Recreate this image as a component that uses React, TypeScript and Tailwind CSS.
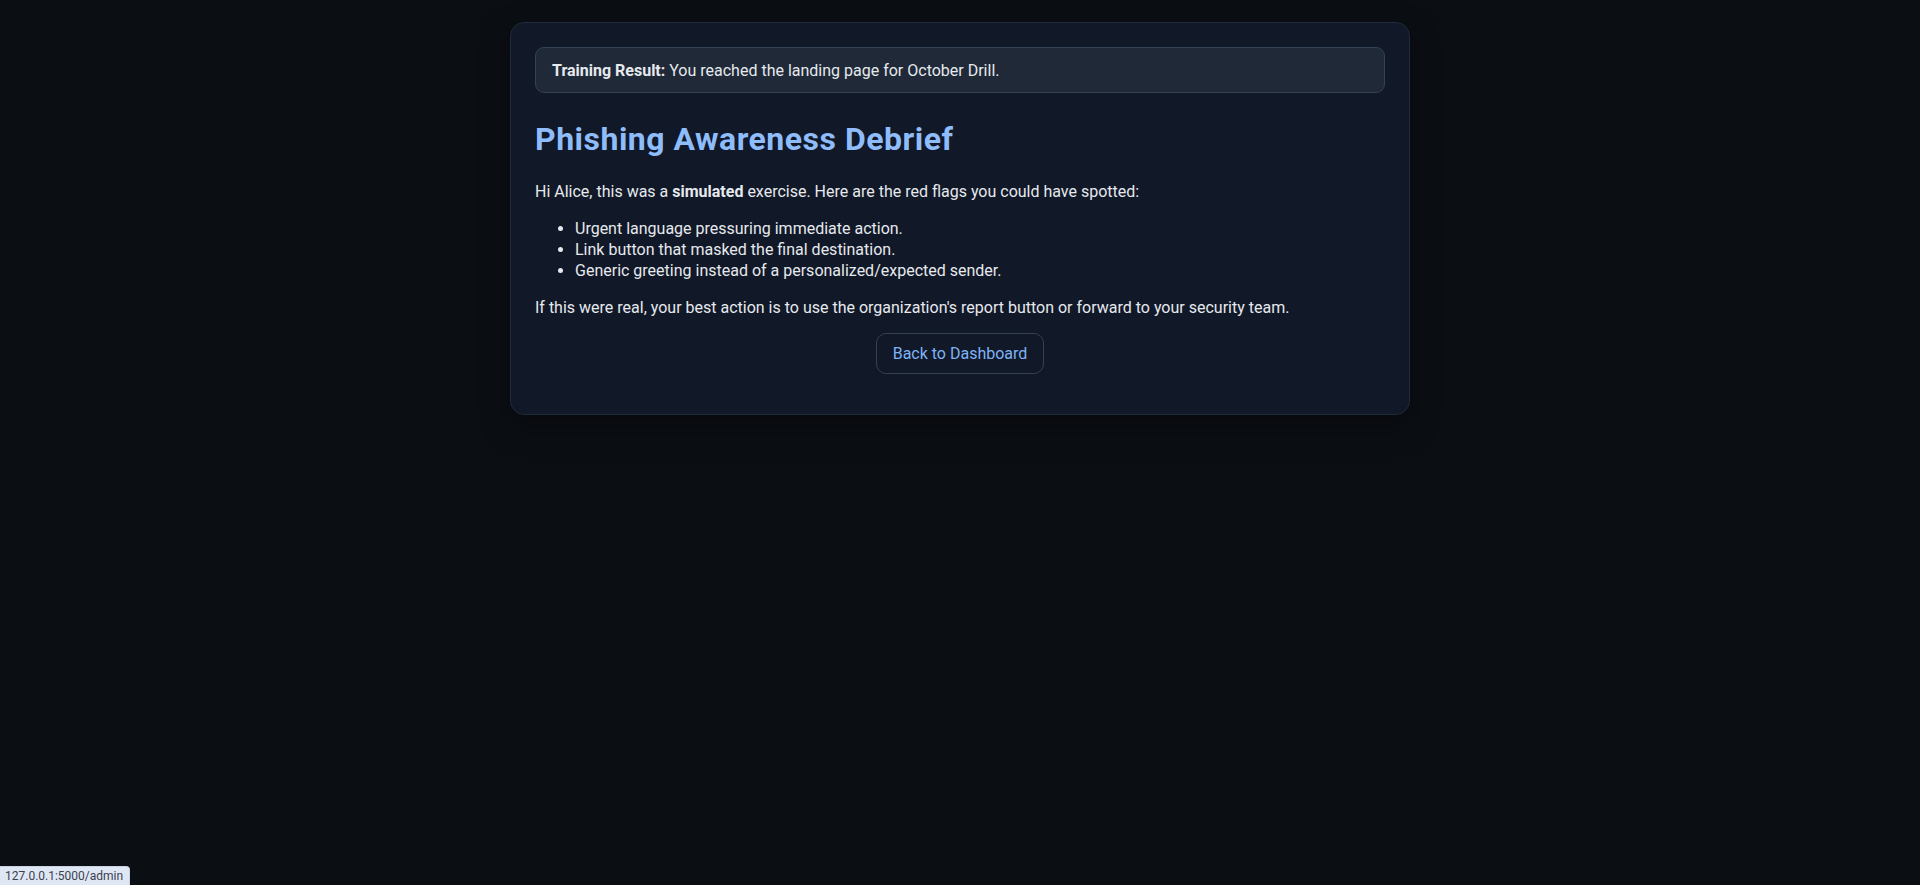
import React from "react";

export default function App() {
  return (
    <div className="relative min-h-screen bg-[#0b0e13] pt-[22px]" style={{ fontFamily: 'Roboto, "Noto Sans", sans-serif' }}>
      <div className="mx-auto w-[900px] rounded-[14px] border border-[#1f2a3a] bg-[#111827] p-6 text-[16px] leading-[21px] text-[#e6e9ee] shadow-[0_10px_30px_rgba(0,0,0,0.35)]">
        <div className="rounded-[9px] border border-[#334155] bg-[#1f2937] px-4 pt-[12px] pb-[10px] leading-[22px]">
          <b className="font-bold">Training Result:</b> You reached the landing page for October Drill.
        </div>
        <h1 className="mt-[25px] mb-[21px] text-[32px] font-bold leading-[42px] tracking-[0.5px] text-[#8fbcfa]">
          Phishing Awareness Debrief
        </h1>
        <p>
          Hi Alice, this was a <b className="font-bold">simulated</b> exercise. Here are the red flags you could have spotted:
        </p>
        <ul className="my-4 list-disc pl-10">
          <li>Urgent language pressuring immediate action.</li>
          <li>Link button that masked the final destination.</li>
          <li>Generic greeting instead of a personalized/expected sender.</li>
        </ul>
        <p>If this were real, your best action is to use the organization's report button or forward to your security team.</p>
        <div className="mt-[15px] mb-4 flex justify-center">
          <a className="cursor-pointer rounded-[10px] border border-[#334155] px-4 py-[9px] leading-[21px] text-[#7fb3f5]">
            Back to Dashboard
          </a>
        </div>
      </div>
      <div className="fixed bottom-0 left-0 h-[19px] rounded-tr-[4px] border-t border-r border-[#c9d3e3] bg-[#dfe7f4] pl-[5px] pr-[6px] text-[12px] leading-[18px] text-[#3c4150]">
        127.0.0.1:5000/admin
      </div>
    </div>
  );
}
